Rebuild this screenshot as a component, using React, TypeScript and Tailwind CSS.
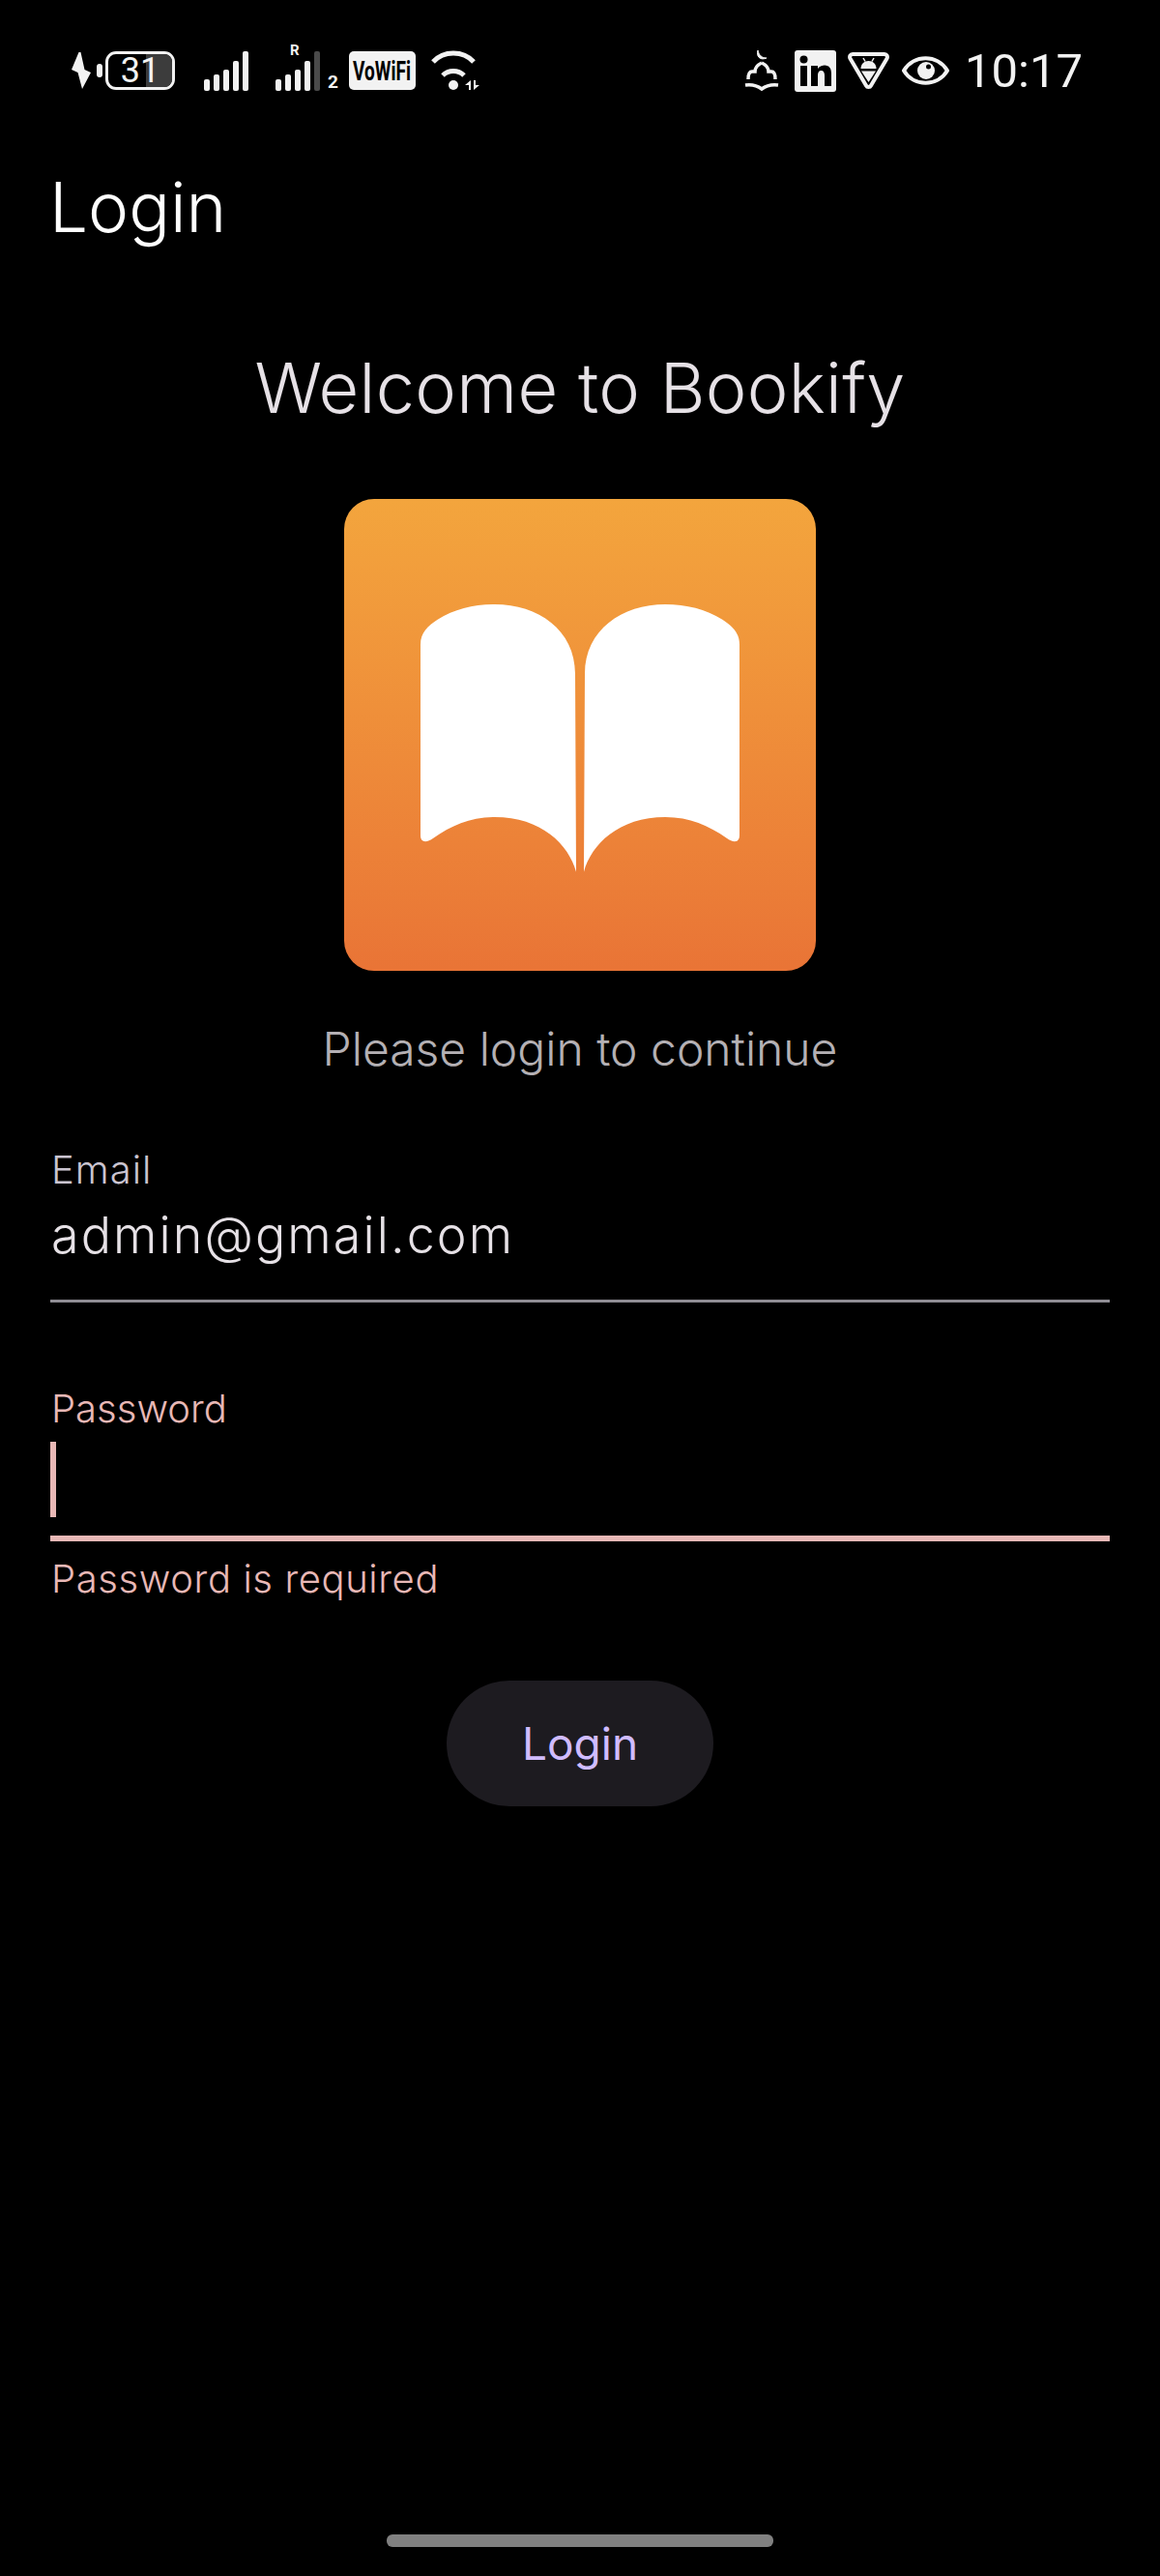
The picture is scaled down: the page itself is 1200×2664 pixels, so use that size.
import React from 'react';

const pageLeft = 'M285 500C285 462 308 442 338 422C390 390 450 375 515 375C650 375 765 455 765 590L768 1205C745 1120 660 1035 515 1035C440 1035 380 1062 325 1100C305 1115 285 1115 285 1092Z';
const pageRight = 'M1275 500C1275 462 1252 442 1222 422C1170 390 1110 375 1045 375C910 375 795 455 795 590L792 1205C815 1120 900 1035 1045 1035C1120 1035 1180 1062 1235 1100C1255 1115 1275 1115 1275 1092Z';

const SignalBars = ({ last = '#f2f2f2' }: { last?: string }) => (
  <svg width="47" height="41" viewBox="0 0 47 41">
    <rect x="0" y="29" width="6" height="12" rx="2" fill="#f2f2f2" />
    <rect x="10" y="24" width="6" height="17" rx="2" fill="#f2f2f2" />
    <rect x="20" y="19" width="6" height="22" rx="2" fill="#f2f2f2" />
    <rect x="30" y="10" width="6" height="31" rx="2" fill="#f2f2f2" />
    <rect x="40" y="0" width="6" height="41" rx="2" fill={last} />
  </svg>
);

const StatusBar = () => (
  <div className="flex items-center justify-between h-[101px] pt-[45px] pl-[74px] pr-[80px] text-[#f2f2f2]">
    <div className="flex items-center">
      <svg width="20" height="38" viewBox="0 0 20 38" fill="#f2f2f2">
        <path d="M7.500 0L0 18L6.500 21L11 38L20 21L13.500 18L9.500 0Z" />
      </svg>
      <div className="ml-[6px] w-[6px] h-[14px] rounded-sm bg-[#f2f2f2]" />
      <div className="relative ml-[3px] w-[72px] h-[40px] rounded-[11px] border-[3px] border-[#f2f2f2] flex items-center justify-center overflow-hidden">
        <div className="absolute right-0 top-0 bottom-0 w-[27px] bg-[#3c3c3c]" />
        <span className="relative text-[36px] leading-none font-['Roboto',sans-serif]">31</span>
      </div>
      <div className="ml-[30px]">
        <SignalBars />
      </div>
      <div className="relative ml-[27px]">
        <SignalBars last="#4a4a4a" />
        <span className="absolute left-[15px] top-[-8px] text-[15px] leading-none font-bold font-['Roboto',sans-serif]">R</span>
      </div>
      <span className="ml-[7px] self-end text-[19px] leading-none font-bold font-['Roboto',sans-serif]">2</span>
      <svg className="ml-[11px]" width="69" height="40" viewBox="0 0 69 40">
        <rect width="69" height="40" rx="5" fill="#f2f2f2" />
        <text transform="translate(4 30) scale(0.68 1)" fontSize="28" fontWeight="700" fontFamily="Roboto, sans-serif" fill="#000">VoWiFi</text>
      </svg>
      <svg className="ml-[15px]" width="52" height="42" viewBox="0 0 52 42" fill="none" stroke="#f2f2f2" strokeWidth="5">
        <path d="M3 12C14 0 34 0 45 12" />
        <path d="M13 26C19 20 29 20 35 26" />
        <circle cx="24" cy="36" r="5" fill="#f2f2f2" stroke="none" />
        <path d="M42 31V41H40V36H36ZM45 41V31H47V36H51Z" stroke="none" fill="#f2f2f2" />
      </svg>
    </div>
    <div className="flex items-center">
      <svg width="36" height="44" viewBox="0 0 36 44" fill="none" stroke="#f2f2f2" strokeWidth="3.500">
        <path d="M14 1C12 7 16 12 23 9C18 9 15 6 14 1Z" fill="#f2f2f2" strokeWidth="1" />
        <path d="M18 14C14 16 11 19 11 23H8C5 23 4 26 4 31M18 14C22 16 25 19 25 23H28C31 23 32 26 32 31" />
        <path d="M1 37C8 36 14 38 18 41C22 38 28 36 35 37" />
      </svg>
      <svg className="ml-[16px]" width="43" height="43" viewBox="0 0 43 43">
        <rect width="43" height="43" rx="3" fill="#f2f2f2" />
        <rect x="6" y="16" width="7" height="21" fill="#000" />
        <circle cx="9.5" cy="9.5" r="4" fill="#000" />
        <path d="M17 16H24V19C26 16 29 15.500 31 15.500C36 15.500 38 19 38 24V37H31V26C31 23 30 21 27.500 21C25 21 24 23 24 26V37H17Z" fill="#000" />
      </svg>
      <svg className="ml-[12px]" width="43" height="38" viewBox="0 0 43 38">
        <path d="M5 2H38C40.500 2 41.500 4.500 40.500 6.500L24 34.500C23 36.500 20 36.500 19 34.500L2.500 6.500C1.500 4.500 2.500 2 5 2Z" fill="none" stroke="#f2f2f2" strokeWidth="4" />
        <path d="M13.500 17C13.500 12 17 9 21.500 9C26 9 29.500 12 29.500 17Z" fill="#f2f2f2" />
        <path d="M14 19.500H29L21.500 31Z" fill="#f2f2f2" />
        <path d="M16 6L18 9.500M27 6L25 9.500" stroke="#f2f2f2" strokeWidth="1.500" />
      </svg>
      <svg className="ml-[13px]" width="49" height="32" viewBox="0 0 49 32" fill="none" stroke="#f2f2f2" strokeWidth="4">
        <path d="M2 16C12 -1 37 -1 47 16C37 33 12 33 2 16Z" />
        <circle cx="25" cy="16" r="9" fill="#f2f2f2" stroke="none" />
        <circle cx="27.500" cy="12" r="2.500" fill="#000" stroke="none" />
      </svg>
      <span className="ml-[16px] text-[49px] leading-none font-['Roboto',sans-serif]">10:17</span>
    </div>
  </div>
);

export default function App() {
  return (
    <div className="w-[1200px] h-[2664px] bg-black flex flex-col font-['Inter',sans-serif]">
      <StatusBar />
      <h1 className="mt-[70px] ml-[51px] text-[71px] leading-[86px] font-light text-white">Login</h1>
      <h2 className="mt-[101px] text-center text-[72px] leading-[86px] font-light tracking-[0.3px] text-[#e6e1e6]">Welcome to Bookify</h2>
      <div className="mt-[72px] mx-auto w-[488px] h-[488px] rounded-[31px] bg-gradient-to-b from-[#f3a53d] to-[#e97436] flex">
        <svg width="488" height="488" viewBox="48 48 1464 1464">
          <path d={pageLeft} fill="#fff" />
          <path d={pageRight} fill="#fff" />
        </svg>
      </div>
      <p className="mt-[54px] text-center text-[48px] leading-[54px] font-light text-[#b4b0b4]">Please login to continue</p>
      <div className="mt-[75px] mx-[52px] border-b-[3px] border-[#8f8d94] pb-[36px]">
        <div className="pl-px text-[40px] leading-[46px] font-light tracking-[1px] text-[#cac4d0]">Email</div>
        <div className="pl-px mt-[15px] text-[52px] leading-[60px] font-light tracking-[0.04em] text-[#e6e1e6]">admin@gmail.com</div>
      </div>
      <div className="mt-[87px] mx-[52px] border-b-[6px] border-[#e8b8b6] pb-[19px]">
        <div className="pl-px text-[40px] leading-[46px] font-light text-[#e8b8b6]">Password</div>
        <div className="mt-[11px] w-[6px] h-[78px] bg-[#e8b8b6]" />
      </div>
      <div className="mt-[16px] ml-[53px] text-[40px] leading-[46px] font-light tracking-[0.6px] text-[#e8b8b6]">Password is required</div>
      <button className="mt-[82px] mx-auto w-[276px] h-[130px] rounded-full bg-[#1d1b20] text-[46px] text-[#d0bcff]">Login</button>
      <div className="mt-auto mb-[30px] mx-auto w-[400px] h-[13px] rounded-[6px] bg-[#808080]" />
    </div>
  );
}
